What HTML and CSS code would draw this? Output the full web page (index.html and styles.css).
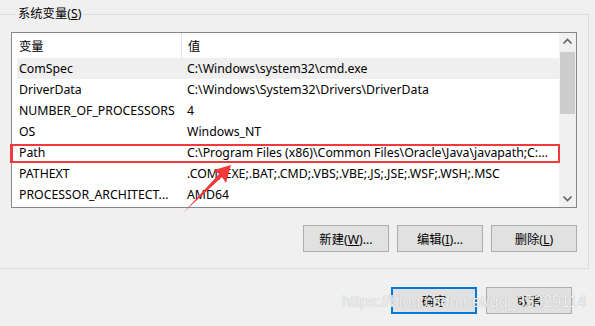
FILE: index.html
```html
<!DOCTYPE html>
<html>

<head>
    <title>环境变量</title>
    <meta charset=utf-8>
    <meta name=viewport content="width=device-width, initial-scale=1">
    <link rel="stylesheet" href="styles.css">
</head>

<body>
    <fieldset class="group">
        <legend>系统变量(<u>S</u>)</legend>
        <div class="list">
            <div class="table">
                <div class="row head">
                    <div class="name">变量</div>
                    <div class="value">值</div>
                </div>
                <div class="row hover">
                    <div class="name">ComSpec</div>
                    <div class="value">C:\Windows\system32\cmd.exe</div>
                </div>
                <div class="row">
                    <div class="name">DriverData</div>
                    <div class="value">C:\Windows\System32\Drivers\DriverData</div>
                </div>
                <div class="row">
                    <div class="name">NUMBER_OF_PROCESSORS</div>
                    <div class="value">4</div>
                </div>
                <div class="row">
                    <div class="name">OS</div>
                    <div class="value">Windows_NT</div>
                </div>
                <div class="row">
                    <div class="name">Path</div>
                    <div class="value">C:\Program Files (x86)\Common Files\Oracle\Java\javapath;C:...</div>
                </div>
                <div class="row">
                    <div class="name">PATHEXT</div>
                    <div class="value">.COM;.EXE;.BAT;.CMD;.VBS;.VBE;.JS;.JSE;.WSF;.WSH;.MSC</div>
                </div>
                <div class="row">
                    <div class="name">PROCESSOR_ARCHITECT...</div>
                    <div class="value">AMD64</div>
                </div>
            </div>
            <div class="scrollbar">
                <svg class="arr" width="17" height="17" viewBox="0 0 17 17">
                    <path d="M4.5 10.5 L8.5 6.5 L12.5 10.5" fill="none" stroke="#606060" stroke-width="1.6"/>
                </svg>
                <div class="track">
                    <div class="thumb"></div>
                </div>
                <svg class="arr" width="17" height="17" viewBox="0 0 17 17">
                    <path d="M4.5 6.5 L8.5 10.5 L12.5 6.5" fill="none" stroke="#606060" stroke-width="1.6"/>
                </svg>
            </div>
            <!-- red highlight on the Path row -->
            <div class="mark"></div>
        </div>
        <div class="actions">
            <button class="btn">新建(<u>W</u>)...</button>
            <button class="btn">编辑(<u>I</u>)...</button>
            <button class="btn">删除(<u>L</u>)</button>
        </div>
    </fieldset>

    <div class="footer">
        <button class="btn default">确定</button>
        <button class="btn">取消</button>
    </div>

    <svg class="arrow" width="595" height="326" viewBox="0 0 595 326">
        <polygon points="231,165 214,170 219,174 184,212 222,177 226,183" fill="#f23a3c"/>
    </svg>

    <div class="watermark">https://blog.csdn.net/qq_35329114</div>
</body>

</html>
```

FILE: styles.css
```css
body {
    margin: 0;
    background: #f0f0f0;
    font-family: "Noto Sans", "Noto Sans CJK SC", sans-serif;
    font-size: 12.3px;
    color: #000;
    position: relative;
    height: 326px;
    overflow: hidden;
}

.group {
    box-sizing: border-box;
    width: 590px;
    margin: 6px 0 0 -1px;
    padding: 0 11px 16px 11px;
    border: 1px solid #dcdcdc;
}

.group legend {
    margin-left: 5px;
    padding: 0 2px;
    line-height: 16px;
    color: #000;
}

.list {
    position: relative;
    box-sizing: border-box;
    height: 176px;
    margin-top: 10px;
    border: 1px solid #828790;
    background: #fff;
    display: flex;
}

.table {
    flex: 1;
    padding-left: 5px;
}

.row {
    display: flex;
    height: 21px;
    align-items: center;
    white-space: nowrap;
}

.row.head {
    height: 25px;
    align-items: stretch;
}

.row.hover {
    background: #efefef;
}

.name {
    width: 162px;
    padding-left: 2px;
    overflow: hidden;
}

.value {
    padding-left: 6px;
}

.head .name,
.head .value {
    display: flex;
    align-items: center;
}

.head .name {
    border-right: 1px solid #e5e5e5;
}

.scrollbar {
    width: 17px;
    background: #f0f0f0;
    display: flex;
    flex-direction: column;
}

.arr {
    display: block;
    flex: none;
}

.track {
    flex: 1;
    padding: 2px 1px;
}

.thumb {
    height: 62px;
    background: #cdcdcd;
}

.mark {
    position: absolute;
    left: -2px;
    top: 111px;
    width: 550px;
    height: 19px;
    box-sizing: border-box;
    border: 2px solid #f23a3c;
    border-left-width: 3px;
}

.actions {
    display: flex;
    justify-content: flex-end;
    gap: 8px;
    margin-top: 17px;
}

.btn {
    box-sizing: border-box;
    width: 86px;
    height: 27px;
    padding: 0;
    background: #e1e1e1;
    border: 1px solid #adadad;
    font-family: "Noto Sans", "Noto Sans CJK SC", sans-serif;
    font-size: 12.3px;
    color: #000;
}

.btn.default {
    border: 2px solid #0078d7;
}

.footer {
    display: flex;
    justify-content: flex-end;
    gap: 9px;
    margin-top: 18px;
    padding-right: 23px;
}

.arrow {
    position: absolute;
    left: 0;
    top: 0;
    pointer-events: none;
}

.watermark {
    position: absolute;
    left: 342px;
    top: 293px;
    font-family: "Liberation Sans", sans-serif;
    font-size: 16px;
    color: rgba(255, 255, 255, 0.85);
    text-shadow: 0 0 1px #9a9a9a;
    pointer-events: none;
}
```
